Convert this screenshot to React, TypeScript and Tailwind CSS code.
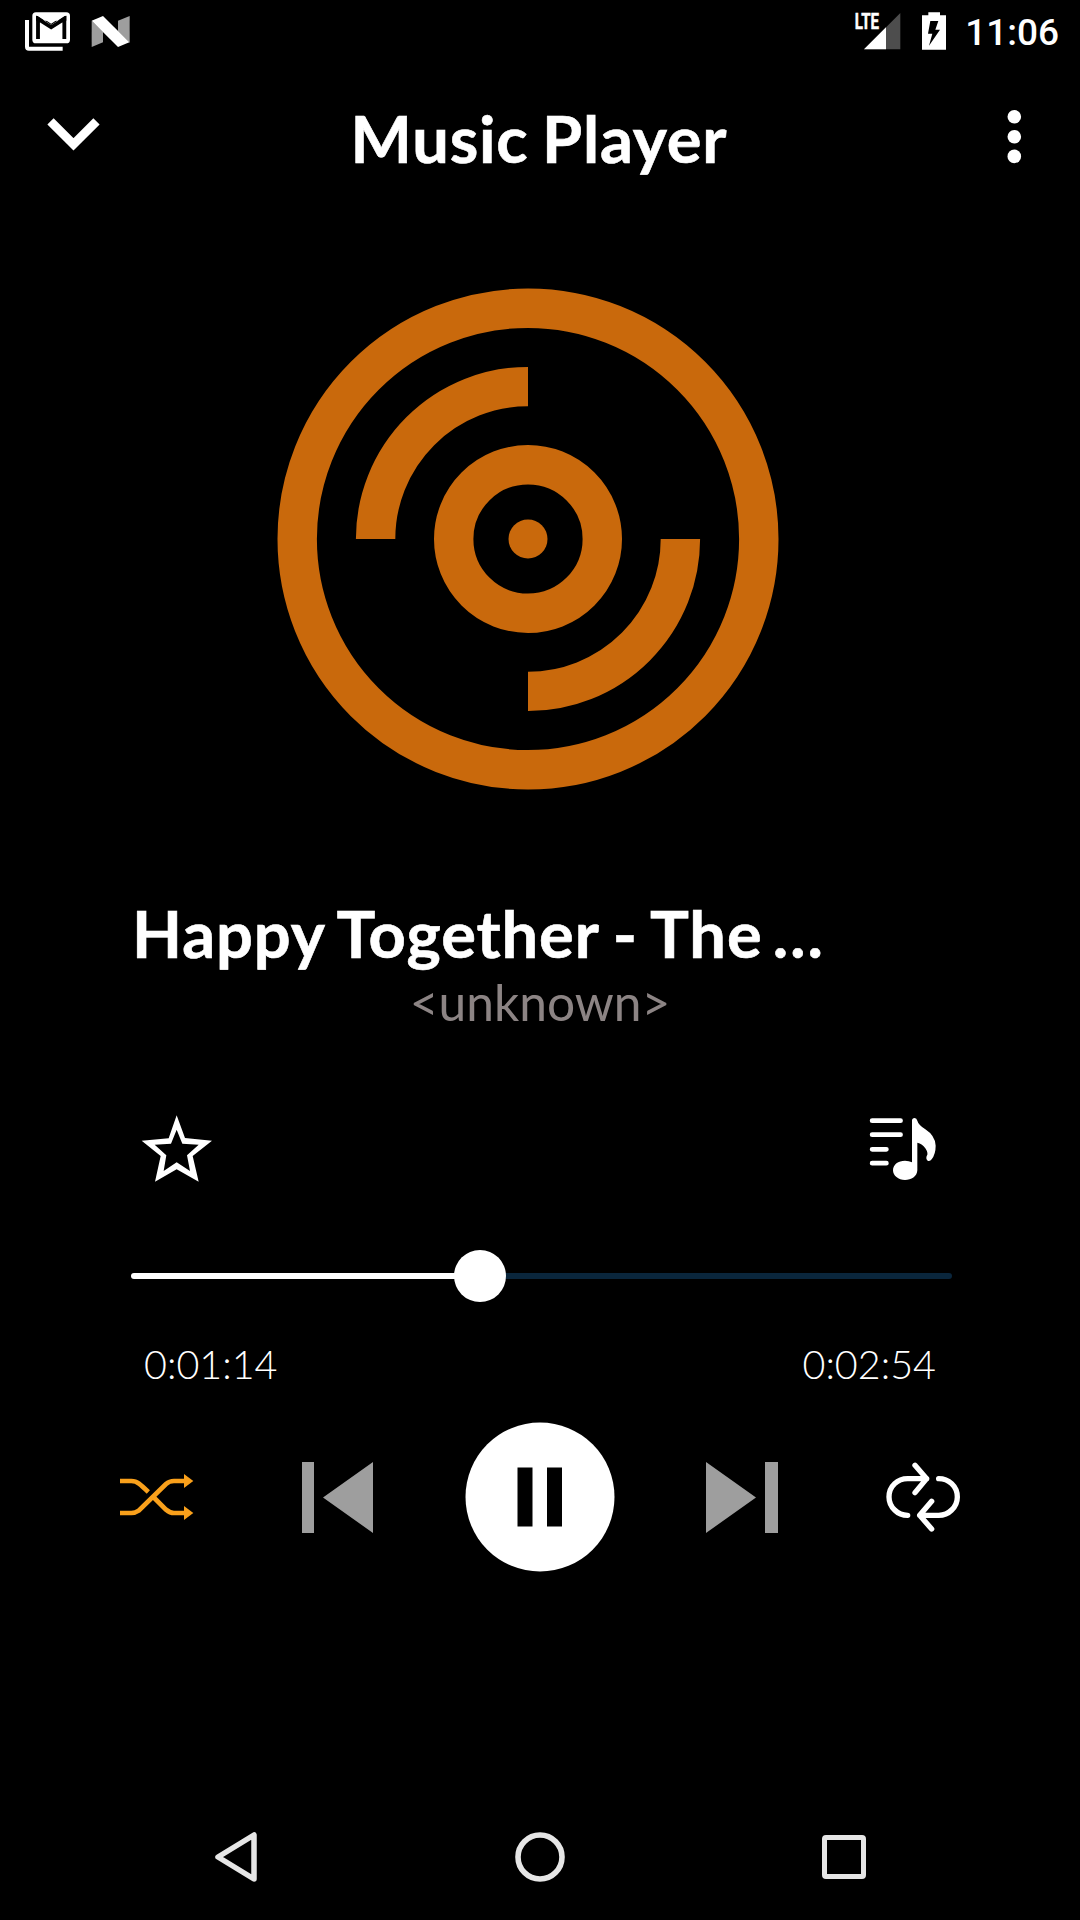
import React from "react";

function StatusBar() {
  return (
    <div className="flex h-[72px] items-start justify-between pl-[25px] pr-[21px]">
      <div className="flex items-start">
        <svg className="mt-[12px]" width="46" height="39" viewBox="75 36 138 117">
          <path d="M81 60V140Q81 146 87 146H188" fill="none" stroke="#fff" strokeWidth="12" />
          <rect x="97" y="37" width="113" height="93" rx="11" fill="#fff" />
          <path d="M114 117V57L153.500 82L193 57V117" fill="none" stroke="#000" strokeWidth="11.500" />
          <path d="M108 48H113L153.500 75L194 48H199V62H108Z" fill="#000" />
          <path d="M115 46L153.500 71L192 46Z" fill="#fff" />
        </svg>
        <svg className="ml-[20px] mt-[15px]" width="40" height="33" viewBox="273 45 120 99">
          <path d="M275 62L309 95V127L275 141Z" fill="#9e9e9e" />
          <path d="M354 62L389 48V128L354 94Z" fill="#9e9e9e" />
          <path d="M275 62L309 48L388 127L354 141Z" fill="#fff" />
        </svg>
      </div>
      <div className="flex items-start">
        <svg className="mt-[6px]" width="47" height="45" viewBox="162 18 141 135">
          <path d="M192 148L301 39V148Z" fill="#4d4d4d" />
          <path d="M192 148L258 82V148Z" fill="#fff" />
          <text x="164" y="87.500" fontSize="67" fontWeight="700" textLength="73" lengthAdjust="spacingAndGlyphs" fill="#fff" stroke="#fff" strokeWidth="1.500" style={{ fontFamily: "Roboto, sans-serif" }}>
            LTE
          </text>
        </svg>
        <svg className="ml-[21px] mt-[12px]" width="24" height="39" viewBox="366 36 72 117">
          <path d="M385 37H420V46H438V149H366V46H385Z" fill="#fff" />
          <path d="M391 63H415L406 89H420L387 137L397 101H384Z" fill="#000" />
        </svg>
        <span className="ml-[19px] mt-[11px] font-[Roboto,sans-serif] text-[37px] font-medium leading-[44px] text-white">11:06</span>
      </div>
    </div>
  );
}

function Header() {
  return (
    <header className="flex h-[128px] items-start justify-between pl-[47px] pr-[58px]">
      <svg className="mt-[46px]" width="54" height="34" viewBox="141 354 162 102">
        <path d="M151.500 364L220.500 433L289.500 364" fill="none" stroke="#fff" strokeWidth="26.500" />
      </svg>
      <h1 className="mr-[30px] mt-[26px] text-[65px] font-bold leading-[80px] tracking-[0.8px] [-webkit-text-stroke:0.6px_white] [word-spacing:-3px]">Music Player</h1>
      <svg className="mt-[38px]" width="15" height="54" viewBox="0 0 15 54">
        <circle cx="7.300" cy="6.800" r="6.800" fill="#fff" />
        <circle cx="7.300" cy="26.700" r="6.800" fill="#fff" />
        <circle cx="7.300" cy="46.400" r="6.800" fill="#fff" />
      </svg>
    </header>
  );
}

function Disc() {
  return (
    <svg className="ml-[276px] mt-[87px] block" width="504" height="504" viewBox="-252 -252 504 504" fill="none" stroke="#c9690c" strokeWidth="39.400">
      <circle r="230.800" />
      <path d="M-152.400 0A152.400 152.400 0 0 1 0 -152.400" />
      <path d="M152.400 0A152.400 152.400 0 0 1 0 152.400" />
      <circle r="74.300" />
      <circle r="19.500" fill="#c9690c" stroke="none" />
    </svg>
  );
}

function StarIcon() {
  return (
    <svg width="72" height="68" viewBox="64 74 216 204">
      <path
        fill="#fff"
        fillRule="evenodd"
        d="M171 75L196 143L277 151L219 197L237 274L171 237L106 274L123 197L66 151L147 144ZM171 118L154 160L105 163L140 195L132 242L171 216L211 242L202 195L237 163L188 160Z"
      />
    </svg>
  );
}

function QueueIcon() {
  return (
    <svg width="68" height="64" viewBox="58 51 204 192">
      <path d="M67.500 62H152.500M67.500 104H152.500M67.500 148H110M67.500 189.500H110" stroke="#fff" strokeWidth="14.500" strokeLinecap="round" />
      <path
        fill="#fff"
        d="M187 62Q187 54 195 54Q201 54 203 62Q206 74 226 87Q257 107 258 137Q258 162 246 178Q241 185 234 182Q228 178 231 168Q237 160 228 146Q218 131 203 128V211C202 230 185 240 166 240C146 240 130 227 130 211C130 193 146 182 166 182Q178 182 187 187Z"
      />
    </svg>
  );
}

function Slider() {
  return (
    <div className="ml-[131px] mt-[66px] flex h-[54px] w-[821px] items-center">
      <div className="h-[6px] w-[327px] rounded-l-full bg-white" />
      <div className="z-10 -ml-1 size-[52px] shrink-0 rounded-full bg-white" />
      <div className="-ml-1 h-[6px] flex-1 rounded-r-full bg-[#0a263c]" />
    </div>
  );
}

function Controls() {
  return (
    <div className="ml-[120px] mt-[34px] flex h-[150px] w-[840px] items-center justify-between">
      <svg width="74" height="48" viewBox="60 160 222 144">
        <g fill="none" stroke="#f9a01b" strokeWidth="14">
          <path d="M60 184H94Q107 184 117 192Q126 199 145 217" />
          <path d="M60 280H94Q106 280 116 273L198 193Q208 184 222 184H256" />
          <path d="M160 232L198 270Q210 280 222 280H256" />
        </g>
        <path d="M252 163L280 184L252 205ZM252 259L280 280L252 301Z" fill="#f9a01b" />
      </svg>
      <svg className="ml-[17px]" width="71" height="71" viewBox="0 0 71 71" fill="#9e9e9e">
        <path d="M0 0H12V71H0ZM71 0V71L21 35.500Z" />
      </svg>
      <svg width="150" height="150" viewBox="0 0 150 150">
        <circle cx="75" cy="75" r="74.500" fill="#fff" />
        <path d="M52.500 45.500H67.500V104.500H52.500ZM82 45.500H97V104.500H82Z" fill="#000" />
      </svg>
      <svg className="mr-[17px]" width="72" height="71" viewBox="0 0 72 71" fill="#9e9e9e">
        <path d="M0 0V71L50 35.500ZM59 0H72V71H59Z" />
      </svg>
      <svg width="74" height="70" viewBox="618 97 222 210" fill="none" stroke="#fff" strokeWidth="16" strokeLinecap="round" strokeLinejoin="round">
        <path d="M683 257Q660 257 644 241Q627 225 627 202Q627 178 644 162Q660 147 683 147H740M705 107L740 147L705 189" />
        <path d="M776 147Q799 147 815 162Q832 178 832 202Q832 225 815 241Q799 257 776 257H719M755 215L719 257L755 298" />
      </svg>
    </div>
  );
}

function NavBar() {
  return (
    <nav className="ml-[214px] mt-[258px] flex h-[54px] w-[652px] items-center justify-between">
      <svg width="44" height="54" viewBox="0 0 44 54" fill="none" stroke="#e6e6e6" strokeWidth="5.500" strokeLinejoin="round">
        <path d="M40 5V49L4 27Z" />
      </svg>
      <svg width="50" height="54" viewBox="0 0 50 54" fill="none" stroke="#e6e6e6" strokeWidth="5.600">
        <circle cx="25" cy="27" r="22" />
      </svg>
      <div className="size-[44px] rounded-[4px] border-[5px] border-[#e6e6e6]" />
    </nav>
  );
}

export default function App() {
  return (
    <div className="h-[1920px] w-[1080px] overflow-hidden bg-black font-[Lato,sans-serif] text-white">
      <StatusBar />
      <Header />
      <Disc />
      <div className="mt-[102px] pl-[132px]">
        <h2 className="whitespace-nowrap text-[65px] font-bold leading-[80px] tracking-[0.9px] [-webkit-text-stroke:0.6px_white] [word-spacing:-2.5px]">
          Happy Together - The<span className="-ml-[4px]"> …</span>
        </h2>
      </div>
      <p className="mt-[-1px] text-center text-[49.7px] leading-[60px] text-[#8c8484]">&lt;unknown&gt;</p>
      <div className="ml-[141px] mt-[83px] flex h-[68px] w-[796px] items-center justify-between">
        <StarIcon />
        <QueueIcon />
      </div>
      <Slider />
      <div className="ml-[144px] mt-[37px] flex h-[48px] w-[792px] justify-between text-[39.5px] font-light leading-[48px]">
        <span>0:01:14</span>
        <span>0:02:54</span>
      </div>
      <Controls />
      <NavBar />
    </div>
  );
}
